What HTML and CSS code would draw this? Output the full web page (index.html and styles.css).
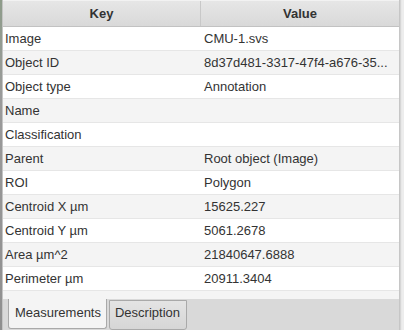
FILE: index.html
```html
<!DOCTYPE html>
<html lang="en">
<head>
  <meta charset="UTF-8" />
  <title>Measurements</title>
  <link rel="stylesheet" href="styles.css">
</head>
<body>
  <div class="window">
    <div class="edge"></div>

    <div class="pane">
      <div class="table">
        <div class="head">
          <div class="col">Key</div>
          <div class="col">Value</div>
        </div>
        <div class="row"><div class="cell">Image</div><div class="cell">CMU-1.svs</div></div>
        <div class="row"><div class="cell">Object ID</div><div class="cell">8d37d481-3317-47f4-a676-35...</div></div>
        <div class="row"><div class="cell">Object type</div><div class="cell">Annotation</div></div>
        <div class="row"><div class="cell">Name</div><div class="cell"></div></div>
        <div class="row"><div class="cell">Classification</div><div class="cell"></div></div>
        <div class="row"><div class="cell">Parent</div><div class="cell">Root object (Image)</div></div>
        <div class="row"><div class="cell">ROI</div><div class="cell">Polygon</div></div>
        <div class="row"><div class="cell">Centroid X µm</div><div class="cell">15625.227</div></div>
        <div class="row"><div class="cell">Centroid Y µm</div><div class="cell">5061.2678</div></div>
        <div class="row"><div class="cell">Area µm^2</div><div class="cell">21840647.6888</div></div>
        <div class="row"><div class="cell">Perimeter µm</div><div class="cell">20911.3404</div></div>
        <div class="row"><div class="cell"></div><div class="cell"></div></div>
      </div>

      <div class="tabs">
        <div class="tab selected">Measurements</div>
        <div class="tab">Description</div>
      </div>
    </div>

    <div class="scroll"></div>
  </div>
</body>
</html>
```

FILE: styles.css
```css
* {
  box-sizing: border-box;
}

body {
  margin: 0;
  width: 404px;
  height: 330px;
  overflow: hidden;
  font-family: 'Liberation Sans', Arial, sans-serif;
  font-size: 13px;
  color: #333;
  background-color: #dadada;
}

.window {
  display: flex;
  height: 330px;
}

.edge {
  width: 2px;
  background: linear-gradient(#8e9c8a, #9a9a9a 30%, #8f8f8f);
}

.pane {
  width: 398px;
  display: flex;
  flex-direction: column;
  border-left: 1px solid #c4c4c4;
  border-right: 1px solid #c6c6c6;
}

.table {
  height: 303px;
  overflow: hidden;
  background-color: #fff;
}

.head {
  display: grid;
  grid-template-columns: 198px 1fr;
  height: 27px;
  border-top: 1px solid #f2f2f2;
  border-bottom: 1px solid #c2c2c2;
  background: linear-gradient(#e6e6e6, #d9d9d9);
}

.head .col {
  padding-top: 1px;
  line-height: 24px;
  text-align: center;
  font-weight: bold;
}

.head .col:first-child {
  border-right: 1px solid #c8c8c8;
}

.row {
  display: grid;
  grid-template-columns: 198px 1fr;
  height: 24px;
  border-bottom: 1px solid #e6e6e6;
  line-height: 23px;
}

.row:nth-child(odd) {
  background-color: #f4f4f4;
}

.cell {
  padding: 0 3px 0 2px;
  white-space: nowrap;
  overflow: hidden;
}

.cell + .cell {
  padding-left: 3px;
}

.tabs {
  flex: 1;
  display: flex;
  align-items: flex-start;
  padding-left: 5px;
  background-color: #d9d9d9;
}

.tab {
  height: 30px;
  margin-top: 1px;
  padding: 0 6px 0 5px;
  line-height: 24px;
  border: 1px solid #a9a9a9;
  border-radius: 0 0 3px 3px;
  background: linear-gradient(#e4e4e4, #d6d6d6);
}

.tab.selected {
  margin-top: 0;
  margin-right: 2px;
  padding: 2px 5px 0 6px;
  border-top: none;
  background: #f4f4f4;
}

.scroll {
  width: 4px;
  border-right: 2px solid #ededed;
  background-color: #e8e8e8;
  border-left: 1px solid #d6d6d6;
}
```
